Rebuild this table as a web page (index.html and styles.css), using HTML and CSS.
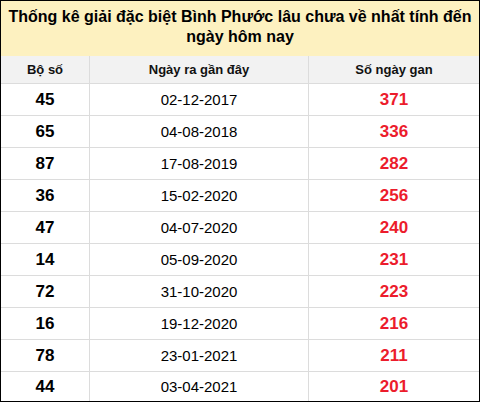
FILE: index.html
```html
<!DOCTYPE html>
<html lang="vi">
<head>
<meta charset="utf-8">
<title>Thống kê giải đặc biệt Bình Phước</title>
<link rel="stylesheet" href="styles.css">
</head>
<body>
<div class="board">
  <div class="title">Thống kê giải đặc biệt Bình Phước lâu chưa về nhất tính đến<br>ngày hôm nay</div>
  <div class="row head">
    <div class="cell">Bộ số</div>
    <div class="cell">Ngày ra gần đây</div>
    <div class="cell">Số ngày gan</div>
  </div>
  <div class="row"><div class="cell num">45</div><div class="cell date">02-12-2017</div><div class="cell gan">371</div></div>
  <div class="row"><div class="cell num">65</div><div class="cell date">04-08-2018</div><div class="cell gan">336</div></div>
  <div class="row"><div class="cell num">87</div><div class="cell date">17-08-2019</div><div class="cell gan">282</div></div>
  <div class="row"><div class="cell num">36</div><div class="cell date">15-02-2020</div><div class="cell gan">256</div></div>
  <div class="row"><div class="cell num">47</div><div class="cell date">04-07-2020</div><div class="cell gan">240</div></div>
  <div class="row"><div class="cell num">14</div><div class="cell date">05-09-2020</div><div class="cell gan">231</div></div>
  <div class="row"><div class="cell num">72</div><div class="cell date">31-10-2020</div><div class="cell gan">223</div></div>
  <div class="row"><div class="cell num">16</div><div class="cell date">19-12-2020</div><div class="cell gan">216</div></div>
  <div class="row"><div class="cell num">78</div><div class="cell date">23-01-2021</div><div class="cell gan">211</div></div>
  <div class="row last"><div class="cell num">44</div><div class="cell date">03-04-2021</div><div class="cell gan">201</div></div>
</div>
</body>
</html>
```

FILE: styles.css
```css
html, body {
  margin: 0;
  padding: 0;
  background: #fff;
}

body {
  font-family: "Liberation Sans", Arial, sans-serif;
  color: #000;
}

.board {
  width: 480px;
  height: 402px;
  box-sizing: border-box;
  border: 1px solid #000;
  display: flex;
  flex-direction: column;
}

.title {
  height: 55px;
  box-sizing: border-box;
  padding-top: 6px;
  background: #fdf1c0;
  font-weight: bold;
  font-size: 16px;
  line-height: 20px;
  text-align: center;
  color: #000;
}

.row {
  display: grid;
  grid-template-columns: 89px 219px 1fr;
  height: 32px;
  box-sizing: border-box;
  border-top: 1px solid #dcdcdc;
}

.row.head {
  height: 27px;
  border-top: none;
  background: #f2f2f2;
}

.row.last {
  height: 30px;
}

.cell {
  display: flex;
  align-items: center;
  justify-content: center;
  border-right: 1px solid #dcdcdc;
}

.cell:last-child {
  border-right: none;
}

.head .cell {
  font-weight: bold;
  font-size: 13px;
  color: #111;
}

.num {
  font-weight: bold;
  font-size: 17px;
  color: #000;
}

.date {
  font-size: 15px;
  color: #000;
}

.gan {
  font-weight: bold;
  font-size: 17px;
  color: #ec1c2c;
}
```
